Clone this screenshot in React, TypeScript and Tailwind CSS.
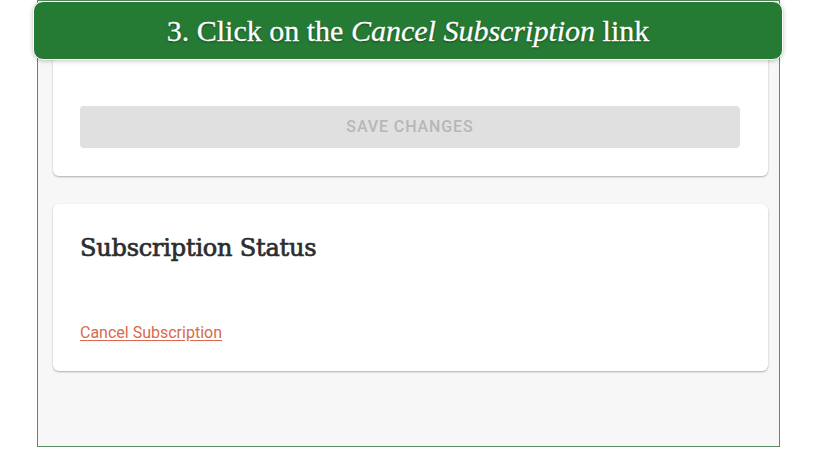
export default function App() {
  return (
    <div className="relative w-[814px] h-[449px] bg-white overflow-hidden">
      <div className="ml-[37px] w-[743px] h-[447px] border border-[#5e8a66] bg-[#f7f7f7] pl-[15px] pr-[11px]">
        <div className="bg-white rounded-b-md shadow-[0_1px_2px_rgba(0,0,0,0.3)] pl-[27px] pr-[28px] pt-[105px] pb-[28px]">
          <button
            type="button"
            disabled
            className="w-full h-[42px] rounded bg-[#e0e0e0] text-[#b5b8b5] text-[16px] font-medium tracking-[0.9px] font-['Roboto',sans-serif]"
          >
            SAVE CHANGES
          </button>
        </div>
        <div className="mt-[28px] h-[167px] bg-white rounded-md shadow-[0_1px_2px_rgba(0,0,0,0.3)] px-[27px] pt-[28px]">
          <h2 className="text-[24px] leading-[32px] font-normal text-[#2d2d2d] font-['DejaVu_Serif',serif] tracking-[-0.2px] [-webkit-text-stroke:0.7px_#2d2d2d]">
            Subscription Status
          </h2>
          <a
            href="#"
            className="block mt-[57px] text-[16px] text-[#d8694d] underline underline-offset-2 font-['Roboto',sans-serif]"
          >
            Cancel Subscription
          </a>
        </div>
      </div>
      <div className="absolute left-[33px] top-[1px] w-[750px] h-[59px] rounded-[10px] bg-[#257a34] border border-white shadow-[0_1px_4px_rgba(0,0,0,0.25)] flex items-center justify-center">
        <span className="text-white text-[30px] font-['Liberation_Serif',serif] [-webkit-text-stroke:0.3px_white] [text-shadow:0_1px_2px_rgba(0,0,0,0.5)]">
          3. Click on the <i>Cancel Subscription</i> link
        </span>
      </div>
    </div>
  );
}
